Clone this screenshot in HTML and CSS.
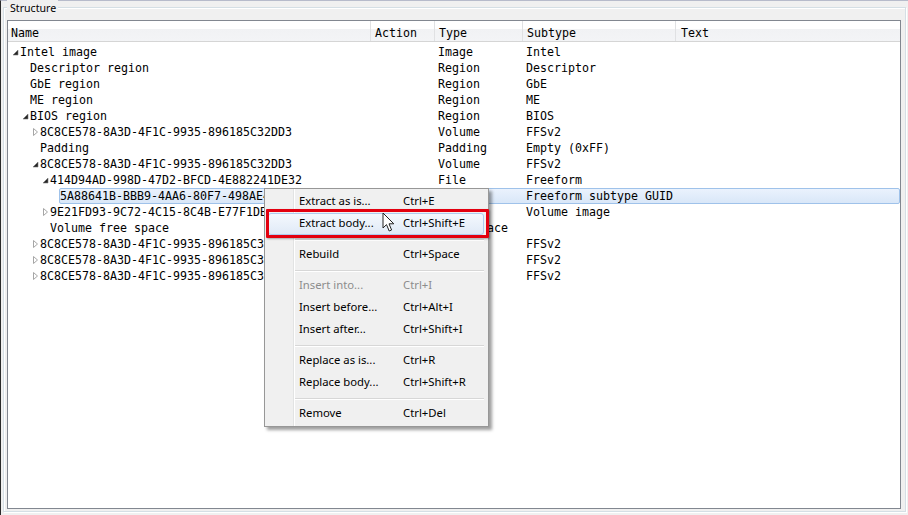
FILE: index.html
```html
<!DOCTYPE html>
<html>
<head>
<meta charset="utf-8">
<link rel="stylesheet" href="styles.css">
</head>
<body>
<div class="window">
  <div class="group">
    <span class="group-label">Structure</span>
    <div class="tree">
      <div class="header">
        <div class="hcell hname">Name</div>
        <div class="hcell">Action</div>
        <div class="hcell">Type</div>
        <div class="hcell">Subtype</div>
        <div class="hcell htext">Text</div>
      </div>
      <div class="rows">
        <div class="row l0"><span class="arrow"><svg class="exp" width="7" height="7" viewBox="0 0 7 7"><polygon points="6,1 6,6 1,6"/></svg></span><div class="cells"><span class="c">Intel image</span><span class="c"></span><span class="c ct">Image</span><span class="c cs">Intel</span><span class="c"></span></div></div>
        <div class="row l1"><span class="arrow"></span><div class="cells"><span class="c">Descriptor region</span><span class="c"></span><span class="c ct">Region</span><span class="c cs">Descriptor</span><span class="c"></span></div></div>
        <div class="row l1"><span class="arrow"></span><div class="cells"><span class="c">GbE region</span><span class="c"></span><span class="c ct">Region</span><span class="c cs">GbE</span><span class="c"></span></div></div>
        <div class="row l1"><span class="arrow"></span><div class="cells"><span class="c">ME region</span><span class="c"></span><span class="c ct">Region</span><span class="c cs">ME</span><span class="c"></span></div></div>
        <div class="row l1"><span class="arrow"><svg class="exp" width="7" height="7" viewBox="0 0 7 7"><polygon points="6,1 6,6 1,6"/></svg></span><div class="cells"><span class="c">BIOS region</span><span class="c"></span><span class="c ct">Region</span><span class="c cs">BIOS</span><span class="c"></span></div></div>
        <div class="row l2"><span class="arrow"><svg class="col" width="7" height="10" viewBox="0 0 7 10"><polygon points="1.5,1.5 5.5,5 1.5,8.5"/></svg></span><div class="cells"><span class="c">8C8CE578-8A3D-4F1C-9935-896185C32DD3</span><span class="c"></span><span class="c ct">Volume</span><span class="c cs">FFSv2</span><span class="c"></span></div></div>
        <div class="row l2"><span class="arrow"></span><div class="cells"><span class="c">Padding</span><span class="c"></span><span class="c ct">Padding</span><span class="c cs">Empty (0xFF)</span><span class="c"></span></div></div>
        <div class="row l2"><span class="arrow"><svg class="exp" width="7" height="7" viewBox="0 0 7 7"><polygon points="6,1 6,6 1,6"/></svg></span><div class="cells"><span class="c">8C8CE578-8A3D-4F1C-9935-896185C32DD3</span><span class="c"></span><span class="c ct">Volume</span><span class="c cs">FFSv2</span><span class="c"></span></div></div>
        <div class="row l3"><span class="arrow"><svg class="exp" width="7" height="7" viewBox="0 0 7 7"><polygon points="6,1 6,6 1,6"/></svg></span><div class="cells"><span class="c">414D94AD-998D-47D2-BFCD-4E882241DE32</span><span class="c"></span><span class="c ct">File</span><span class="c cs">Freeform</span><span class="c"></span></div></div>
        <div class="row l4 selected"><span class="arrow"></span><div class="cells"><span class="c">5A88641B-BBB9-4AA6-80F7-498AE407A0FC</span><span class="c"></span><span class="c ct">Section</span><span class="c cs">Freeform subtype GUID</span><span class="c"></span></div></div>
        <div class="row l3"><span class="arrow"><svg class="col" width="7" height="10" viewBox="0 0 7 10"><polygon points="1.5,1.5 5.5,5 1.5,8.5"/></svg></span><div class="cells"><span class="c">9E21FD93-9C72-4C15-8C4B-E77F1DB2D792</span><span class="c"></span><span class="c ct">Section</span><span class="c cs">Volume image</span><span class="c"></span></div></div>
        <div class="row l3"><span class="arrow"></span><div class="cells"><span class="c">Volume free space</span><span class="c"></span><span class="c ct">Free space</span><span class="c cs"></span><span class="c"></span></div></div>
        <div class="row l2"><span class="arrow"><svg class="col" width="7" height="10" viewBox="0 0 7 10"><polygon points="1.5,1.5 5.5,5 1.5,8.5"/></svg></span><div class="cells"><span class="c">8C8CE578-8A3D-4F1C-9935-896185C32DD3</span><span class="c"></span><span class="c ct">Volume</span><span class="c cs">FFSv2</span><span class="c"></span></div></div>
        <div class="row l2"><span class="arrow"><svg class="col" width="7" height="10" viewBox="0 0 7 10"><polygon points="1.5,1.5 5.5,5 1.5,8.5"/></svg></span><div class="cells"><span class="c">8C8CE578-8A3D-4F1C-9935-896185C32DD3</span><span class="c"></span><span class="c ct">Volume</span><span class="c cs">FFSv2</span><span class="c"></span></div></div>
        <div class="row l2"><span class="arrow"><svg class="col" width="7" height="10" viewBox="0 0 7 10"><polygon points="1.5,1.5 5.5,5 1.5,8.5"/></svg></span><div class="cells"><span class="c">8C8CE578-8A3D-4F1C-9935-896185C32DD3</span><span class="c"></span><span class="c ct">Volume</span><span class="c cs">FFSv2</span><span class="c"></span></div></div>
      </div>
    </div>
  </div>

  <div class="menu">
    <div class="mi"><span>Extract as is...</span><span>Ctrl+E</span></div>
    <div class="mi hover"><span>Extract body...</span><span>Ctrl+Shift+E</span></div>
    <div class="msep"></div>
    <div class="mi"><span>Rebuild</span><span>Ctrl+Space</span></div>
    <div class="msep"></div>
    <div class="mi disabled"><span>Insert into...</span><span>Ctrl+I</span></div>
    <div class="mi"><span>Insert before...</span><span>Ctrl+Alt+I</span></div>
    <div class="mi"><span>Insert after...</span><span>Ctrl+Shift+I</span></div>
    <div class="msep"></div>
    <div class="mi"><span>Replace as is...</span><span>Ctrl+R</span></div>
    <div class="mi"><span>Replace body...</span><span>Ctrl+Shift+R</span></div>
    <div class="msep"></div>
    <div class="mi"><span>Remove</span><span>Ctrl+Del</span></div>
  </div>
  <div class="redbox"></div>
  <svg class="cursor" width="13" height="21" viewBox="0 0 13 21"><path d="M1,1 L1,16 L4.5,12.6 L7.2,19 L9.6,18 L7,11.8 L11.8,11.8 Z" fill="#fff" stroke="#222" stroke-width="1" stroke-linejoin="miter"/></svg>
</div>
</body>
</html>
```
FILE: styles.css
```css
html, body {
  margin: 0;
  padding: 0;
}
body {
  background: #f0f0f0;
  width: 908px;
  height: 515px;
  overflow: hidden;
}
.window {
  position: relative;
  box-sizing: border-box;
  width: 908px;
  height: 515px;
  background: #f0f0f0;
  border-top: 1px solid #b7bbcb;
  border-left: 1px solid #2b2b2b;
  padding: 6px 2px 3px 2px;
}
.group {
  position: relative;
  box-sizing: border-box;
  height: 505px;
  border: 1px solid #d5dfe5;
  box-shadow: inset 1px 1px 0 #fff, 1px 1px 0 #fff;
  padding: 12px 4px 2px 3px;
}
.group-label {
  position: absolute;
  left: 3px;
  top: -8px;
  padding: 0 2px 0 3px;
  background: #f0f0f0;
  font-family: "Noto Sans", sans-serif;
  font-size: 10.6px;
  line-height: 16px;
  color: #000;
}
.tree {
  box-sizing: border-box;
  height: 489px;
  border: 1px solid #828790;
  background: #fff;
  font-family: "DejaVu Sans Mono", monospace;
  font-size: 11.63px;
  color: #000;
}
.header {
  display: grid;
  grid-template-columns: 362px 64px 88px 153px 1fr;
  height: 21px;
  box-sizing: border-box;
  border-bottom: 1px solid #d5d5d5;
  background: linear-gradient(#ffffff, #ffffff 40%, #f1f2f4 41%, #f3f4f6);
}
.hcell {
  line-height: 20px;
  padding-top: 2px;
  height: 20px;
  box-sizing: border-box;
  padding-left: 4px;
  border-left: 1px solid #e0e1e3;
  white-space: nowrap;
}
.hname {
  border-left: none;
  padding-left: 3px;
}
.htext {
  padding-left: 5px;
}
.rows {
  padding-top: 2px;
}
.row {
  display: flex;
  height: 16px;
  --ind: 0px;
  padding-left: calc(4px + var(--ind));
}
.l1 { --ind: 10px; }
.l2 { --ind: 20px; }
.l3 { --ind: 30px; }
.l4 { --ind: 40px; }
.arrow {
  flex: 0 0 7px;
  width: 7px;
  height: 16px;
  display: flex;
  align-items: center;
}
.arrow svg { display: block; }
.exp polygon {
  fill: #262626;
  stroke: #7a7a7a;
  stroke-width: 0.6;
}
.col polygon {
  fill: #fff;
  stroke: #a6a6a6;
  stroke-width: 1;
}
.cells {
  flex: 1;
  display: grid;
  grid-template-columns: calc(351px - var(--ind)) 64px 88px 153px 1fr;
  box-sizing: border-box;
  height: 16px;
  line-height: 16px;
}
.c {
  white-space: nowrap;
  overflow: hidden;
  padding-left: 4px;
}
.c:first-child {
  padding-left: 1px;
}
.selected .cells {
  border: 1px solid #9fc2ea;
  border-radius: 2px;
  background: linear-gradient(#eaf2fd, #d9e7f8);
  line-height: 14px;
}
.selected .c { padding-left: 3px; }
.selected .c:first-child { padding-left: 0; }

.menu {
  position: absolute;
  left: 263px;
  top: 187px;
  width: 225px;
  box-sizing: border-box;
  border: 1px solid #979797;
  background: #f0f0f0;
  padding: 2px 4px 1px 3px;
  box-shadow: 3px 3px 3px rgba(0,0,0,0.38);
  font-family: "Noto Sans", sans-serif;
  font-size: 11.3px;
  color: #000;
  background-image: linear-gradient(90deg, transparent 28px, #e2e3e3 28px, #e2e3e3 29px, #ffffff 29px, #ffffff 30px, transparent 30px);
}
.mi {
  display: grid;
  grid-template-columns: 104px auto;
  height: 22px;
  line-height: 18px;
  box-sizing: border-box;
  padding-left: 30px;
  border: 1px solid transparent;
  border-radius: 3px;
}
.mi span { white-space: nowrap; }
.mi.hover {
  border-color: #aecbef;
  background: linear-gradient(#f4f8fd, #e0eaf7);
}
.mi.disabled { color: #8d8d8d; }
.msep {
  height: 9px;
  margin-left: 27px;
  background: linear-gradient(transparent 4px, #d7d7d7 4px, #d7d7d7 5px, #fff 5px, #fff 6px, transparent 6px);
}
.redbox {
  position: absolute;
  left: 265px;
  top: 208px;
  width: 217px;
  height: 23px;
  border: 3px solid #e3000f;
  border-radius: 1px;
  box-shadow: 1px 1px 2px rgba(0,0,0,0.3);
}
.cursor {
  position: absolute;
  left: 381px;
  top: 211px;
}
```
